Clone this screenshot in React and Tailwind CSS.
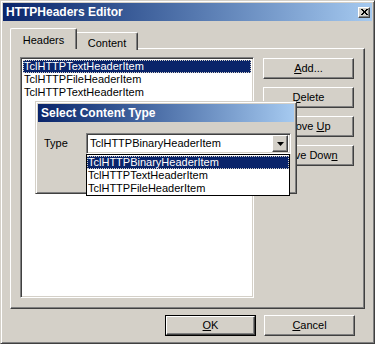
import React from 'react';

const raised =
  'border border-t-white border-l-white border-r-[#404040] border-b-[#404040] shadow-[inset_-1px_-1px_#808080]';
const sunken =
  'border border-t-[#808080] border-l-[#808080] border-r-white border-b-white shadow-[inset_1px_1px_#404040,inset_-1px_-1px_#d4d0c8]';

const Btn = ({ children, isDefault }) => (
  <div className={isDefault ? 'border border-black' : ''}>
    <div className={`${raised} bg-[#d4d0c8] flex items-center justify-center text-[11px] text-black ${isDefault ? 'w-[89px] h-[19px]' : 'w-[91px] h-[21px]'}`}>
      {children}
    </div>
  </div>
);

const TitleBar = ({ title, close }) => (
  <div className="h-[18px] flex items-center justify-between bg-linear-to-r from-[#0a246a] to-[#a6caf0] pl-[3px] pr-[2px]">
    <span className="text-white font-bold text-[12px] leading-none">{title}</span>
    {close && (
      <div className={`${raised} bg-[#d4d0c8] w-[12px] h-[11px] flex items-center justify-center`}>
        <svg width="7" height="6" viewBox="0 0 7 6">
          <path d="M0 0L6 6M1 0L7 6M6 0L0 6M7 0L1 6" stroke="black" strokeWidth="1" />
        </svg>
      </div>
    )}
  </div>
);

const Item = ({ text, selected }) => (
  <div className={`h-[13px] leading-[13px] pl-[1px] text-[11px] whitespace-nowrap ${selected ? 'bg-[#0a246a] text-white outline-1 outline-dotted outline-[#d4d0c8] -outline-offset-1' : 'text-black'}`}>
    {text}
  </div>
);

export default function App() {
  return (
    <div className="w-[375px] h-[344px] relative bg-[#d4d0c8] font-['Liberation_Sans',Arial,sans-serif] border border-t-[#d4d0c8] border-l-[#d4d0c8] border-r-[#404040] border-b-[#404040] shadow-[inset_1px_1px_white,inset_-1px_-1px_#808080] p-[2px] flex flex-col">
      <TitleBar title="HTTPHeaders Editor" close />

      {/* tabs */}
      <div className="flex items-end pl-[7px] mt-[7px] h-[21px] relative z-10">
        <div className="h-[21px] w-[67px] bg-[#d4d0c8] border-t border-l border-white border-r border-r-[#404040] rounded-tl-[2px] rounded-tr-[2px] shadow-[inset_-1px_0_#808080] flex justify-center pt-[3px] text-[11px]">
          Headers
        </div>
        <div className="h-[18px] w-[61px] bg-[#d4d0c8] border-t border-white border-r border-r-[#404040] rounded-tr-[2px] shadow-[inset_-1px_0_#808080] flex justify-center pt-[2px] text-[11px] -mb-px">
          Content
        </div>
      </div>

      {/* panel */}
      <div className="ml-[7px] mr-[7px] -mt-px h-[261px] border border-t-white border-l-white border-r-[#404040] border-b-[#404040] shadow-[inset_-1px_-1px_#808080] flex gap-[9px] pl-[9px] pt-[8px]">
        <div className={`${sunken} bg-white w-[234px] h-[241px] p-[2px]`}>
          <Item text="TclHTTPTextHeaderItem" selected />
          <Item text="TclHTTPFileHeaderItem" />
          <Item text="TclHTTPTextHeaderItem" />
        </div>
        <div className="flex flex-col gap-[8px] pt-px">
          <Btn><span><u>A</u>dd...</span></Btn>
          <Btn><span><u>D</u>elete</span></Btn>
          <Btn><span>Move <u>U</u>p</span></Btn>
          <Btn><span>Move Dow<u>n</u></span></Btn>
        </div>
      </div>

      {/* bottom buttons */}
      <div className="flex justify-end gap-[8px] pr-[17px] mt-[6px]">
        <Btn isDefault><span><u>O</u>K</span></Btn>
        <Btn><span><u>C</u>ancel</span></Btn>
      </div>

      {/* modal dialog */}
      <div className="absolute left-[34px] top-[100px] w-[262px] h-[93px] bg-[#d4d0c8] border border-t-[#d4d0c8] border-l-[#d4d0c8] border-r-[#404040] border-b-[#404040] shadow-[inset_1px_1px_white,inset_-1px_-1px_#808080] p-[2px] z-20">
        <TitleBar title="Select Content Type" />
        <div className="flex items-center pl-[6px] mt-[11px]">
          <span className="text-[11px] w-[42px]">Type</span>
          <div className={`${sunken} bg-white w-[205px] h-[21px] flex items-center p-[2px]`}>
            <span className="flex-1 text-[11px] pl-[1px]">TclHTTPBinaryHeaderItem</span>
            <div className={`${raised} bg-[#d4d0c8] w-[16px] h-[17px] flex items-center justify-center`}>
              <svg width="7" height="4" viewBox="0 0 7 4">
                <path d="M0 0H7L3.5 4Z" fill="black" />
              </svg>
            </div>
          </div>
        </div>
      </div>

      {/* dropdown list */}
      <div className="absolute left-[85px] top-[153px] w-[204px] h-[42px] bg-white border border-black z-30 pt-px">
        <Item text="TclHTTPBinaryHeaderItem" selected />
        <Item text="TclHTTPTextHeaderItem" />
        <Item text="TclHTTPFileHeaderItem" />
      </div>
    </div>
  );
}
